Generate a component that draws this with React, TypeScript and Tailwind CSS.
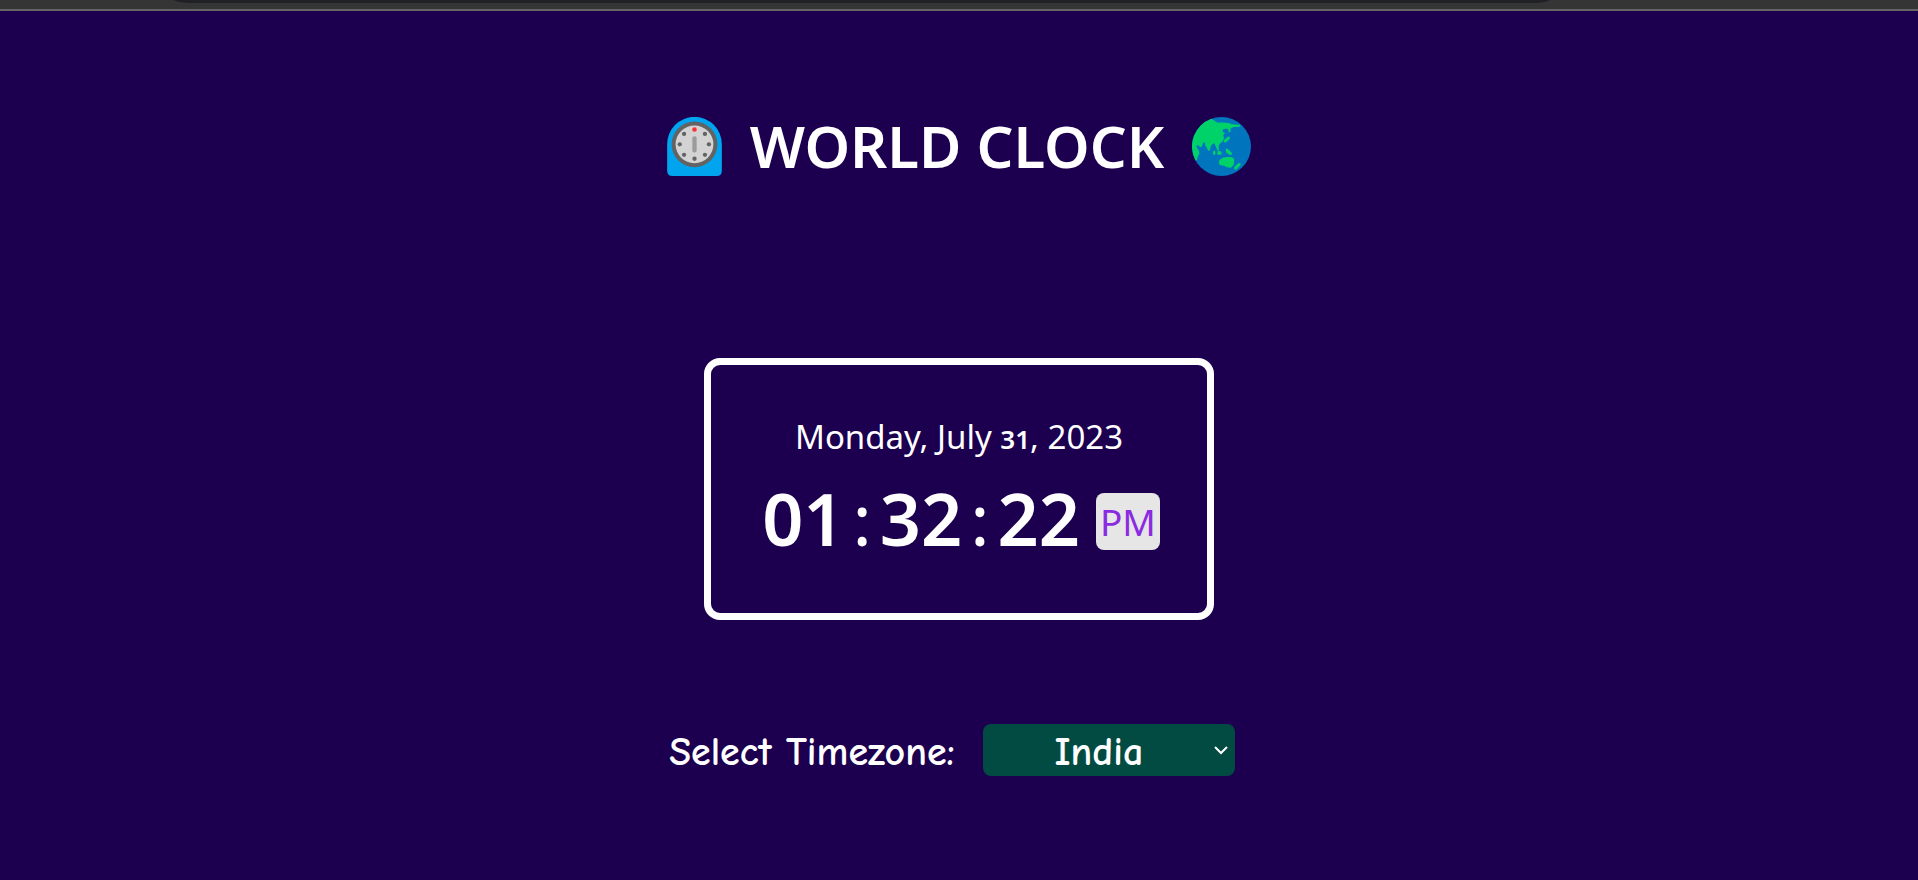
import { useState } from "react";

const zones = ["India", "Japan", "Australia", "Germany", "United Kingdom", "New York"];

function ClockIcon() {
  return (
    <svg className="h-[59px] w-[55px] shrink-0" viewBox="48 37 165 178" aria-hidden="true">
      <path d="M48 119a82.5 82.5 0 0 1 165 0v80q0 16-16 16H64q-16 0-16-16z" fill="#00a4ef" />
      <circle cx="130.500" cy="119.500" r="69" fill="#636363" />
      <circle cx="130.500" cy="119.500" r="57" fill="#d3d3d3" />
      <rect x="124" y="95" width="13" height="49" rx="6" fill="#9b9b9b" />
      <g fill="#636363">
        <circle cx="162" cy="88" r="6.500" />
        <circle cx="174" cy="119.500" r="6.500" />
        <circle cx="162" cy="151" r="6.500" />
        <circle cx="130.500" cy="163" r="6.500" />
        <circle cx="99" cy="151" r="6.500" />
        <circle cx="86" cy="119.500" r="6.500" />
        <circle cx="99" cy="88" r="6.500" />
      </g>
      <circle cx="130.500" cy="75" r="6.800" fill="#f9312f" />
    </svg>
  );
}

function GlobeIcon() {
  return (
    <svg className="size-[59px] shrink-0" viewBox="39 37 177 177" aria-hidden="true">
      <circle cx="127.500" cy="125.500" r="88.500" fill="#0074bd" />
      <g fill="#00d26a">
        <path d="M97 42A88.500 88.500 0 0 0 50 168l4-2 3-12 4-6-1-10-8-12q0-5 6-4l5 5h5l4-12q3-5 6 0l1 9 3 2 6 12q3 2 5-3l3-12 7-7 4 1 5 13q3 4 3 9l5-3-1-12 3-7 8-6 5-10-2-10 5-6-7-3 1-8 9-2 6 1 3 12 5-5-1-8 10-5 18-1q4-3 0-6l-26-1q-3-4-8-4-16-3-32-1l-8-5z" />
        <path d="M135 107l10-10q4-3 7 0 2 3-1 7l-9 8q-4 3-7 0-2-3 0-5z" />
        <path d="M141 131l8 4 9 9q2 4-1 7h-5l-10-8q-3-7-1-12z" />
        <rect x="102" y="138" width="7" height="13" rx="3" />
        <path d="M116 139h8l4 5-2 6h-10q-3-5 0-11z" />
        <path d="M132 159l12-2h10l10 3q4 11 0 20l-8 9-13-1-7-5-14-2q-3-6-1-15z" />
        <path d="M167 186l11-10q4-2 7 1 1 4-3 7l-9 10q-4 2-7-1-2-3 1-7z" />
      </g>
    </svg>
  );
}

export default function App() {
  const [zone, setZone] = useState("India");

  return (
    <div className="min-h-screen bg-[#1c004f] font-['Noto_Sans',sans-serif] text-white">
      <div className="h-[11px] border-b-2 border-[#666666] bg-[#353535]">
        <svg className="block h-[3px] w-full" viewBox="0 0 1918 3" preserveAspectRatio="none" aria-hidden="true">
          <path d="M173 0H1550Q1544 3 1536 3H188Q180 3 173 0z" fill="#202124" />
        </svg>
      </div>

      <main className="flex flex-col items-center pt-[95px]">
        <h1 className="flex items-center justify-center gap-7 text-[58px] font-semibold leading-[80px]">
          <ClockIcon />
          <span>WORLD CLOCK</span>
          <GlobeIcon />
        </h1>

        <section className="mt-[172px] flex w-[510px] max-w-full flex-col items-center rounded-2xl border-[7px] border-white pb-[54px] pt-12">
          <p className="text-[33px] leading-[48px]">
            Monday, July <span className="text-[26px] font-semibold">31</span>, 2023
          </p>
          <div className="mt-5 flex items-center gap-4 pl-1">
            <div className="flex gap-2 pb-1.5 text-[72px] font-semibold leading-[70px]">
              <span>01</span>
              <span className="font-normal">:</span>
              <span>32</span>
              <span className="font-normal">:</span>
              <span>22</span>
            </div>
            <span className="rounded-lg bg-[#e6e6e6] px-1 text-[37px] leading-[57px] text-[#8a2be2]">PM</span>
          </div>
        </section>

        <div className="mr-3.5 mt-[104px] flex items-center gap-7 font-['Comic_Sans_MS','Comic_Neue',cursive] text-[40px] font-bold leading-[48px]">
          <label htmlFor="timezone" className="pt-1">
            Select Timezone:
          </label>
          <div className="relative">
            <select
              id="timezone"
              value={zone}
              onChange={(e) => setZone(e.target.value)}
              className="block h-[52px] w-[252px] appearance-none rounded-lg bg-[#024b43] pr-5 pt-1 text-center"
            >
              {zones.map((z) => (
                <option key={z}>{z}</option>
              ))}
            </select>
            <svg className="pointer-events-none absolute right-1.5 top-5 h-3 w-4" viewBox="0 0 16 12" fill="none" stroke="white" strokeWidth="2" aria-hidden="true">
              <path d="M2 3l6 6 6-6" />
            </svg>
          </div>
        </div>
      </main>
    </div>
  );
}
